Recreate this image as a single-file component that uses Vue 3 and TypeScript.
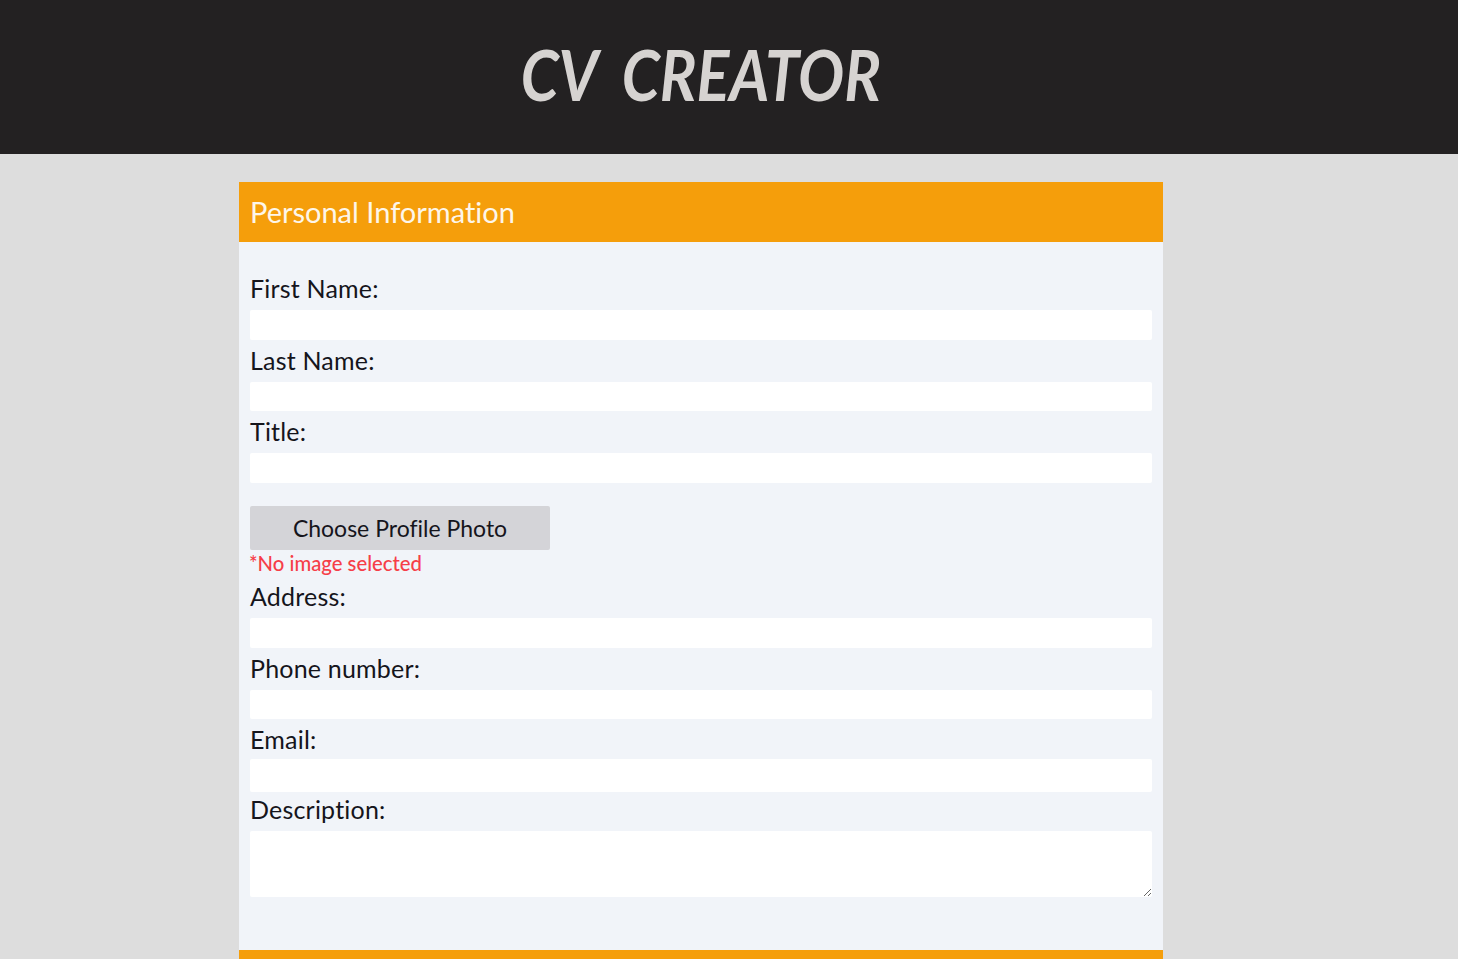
<script setup lang="ts">
interface Field {
  label: string
  type: string
}

const nameFields: Field[] = [
  { label: 'First Name:', type: 'text' },
  { label: 'Last Name:', type: 'text' },
  { label: 'Title:', type: 'text' },
]
const contactFields: Field[] = [
  { label: 'Address:', type: 'text' },
  { label: 'Phone number:', type: 'tel' },
]
</script>

<template>
  <div class="page">
    <header class="top">
      <h1 class="brand"><span class="brand-text">CV CREATOR</span></h1>
    </header>
    <main class="column">
      <section class="panel">
        <h2 class="panel-title">Personal Information</h2>
        <form class="form">
          <label v-for="f in nameFields" :key="f.label" class="field">
            <span class="label">{{ f.label }}</span>
            <input class="control" :type="f.type" />
          </label>
          <button type="button" class="photo">Choose Profile Photo</button>
          <p class="error">*No image selected</p>
          <label v-for="f in contactFields" :key="f.label" class="field">
            <span class="label">{{ f.label }}</span>
            <input class="control" :type="f.type" />
          </label>
          <label class="field email">
            <span class="label">Email:</span>
            <input class="control" type="email" />
          </label>
          <label class="field description">
            <span class="label">Description:</span>
            <textarea class="control area"></textarea>
          </label>
        </form>
      </section>
      <div class="next-bar"></div>
    </main>
  </div>
</template>

<style>
html,
body {
  margin: 0;
  height: 100%;
  overflow: hidden;
  background: #dddddd;
}
</style>

<style scoped>
.page {
  height: 959px;
  overflow: hidden;
  background: #dddddd;
  font-family: "Lato", "Open Sans", sans-serif;
  font-variant-ligatures: none;
  color: #15151c;
}
.top {
  height: 154px;
  background: #232122;
  padding-left: 239px;
  box-sizing: border-box;
}
.brand {
  width: 924px;
  margin: 0;
  text-align: center;
  font-style: italic;
  font-weight: 700;
  font-size: 70px;
  line-height: 148px;
  color: #d6d3d1;
  white-space: nowrap;
}
.brand-text {
  display: inline-block;
  transform: scaleX(0.875);
  word-spacing: 14px;
}
.column {
  width: 924px;
  margin: 28px 0 0 239px;
}
.panel {
  background: #f1f4f9;
}
.panel-title {
  margin: 0;
  height: 60px;
  padding-left: 11px;
  background: #f59e0b;
  color: #fdf6ea;
  font-size: 29px;
  font-weight: 400;
  line-height: 60px;
}
.form {
  display: flex;
  flex-direction: column;
  align-items: flex-start;
  padding: 26px 11px 53px;
}
.field {
  display: flex;
  flex-direction: column;
  width: 100%;
}
.label {
  height: 42px;
  font-size: 25px;
  line-height: 40px;
  letter-spacing: 0.2px;
}
.control {
  display: block;
  width: 100%;
  height: 29.6px;
  box-sizing: border-box;
  padding: 0 6px;
  border: none;
  border-radius: 2px;
  background: #ffffff;
  font: inherit;
  outline: none;
}
.email .control {
  height: 33px;
  margin-top: -2.6px;
}
.description {
  margin-top: -3px;
}
.description .area {
  height: 66px;
  resize: both;
  width: 100%;
}
.photo {
  width: 300px;
  height: 44px;
  margin-top: 23px;
  border: none;
  border-radius: 2px;
  background: #d4d4d8;
  color: #15151c;
  font-family: inherit;
  font-variant-ligatures: none;
  font-size: 23px;
  padding: 0;
}
.error {
  height: 26.4px;
  margin: 0 0 0 -1px;
  color: #f63e48;
  font-size: 20.3px;
  font-weight: 500;
  line-height: 26px;
}
.next-bar {
  height: 60px;
  background: #f59e0b;
}
</style>
